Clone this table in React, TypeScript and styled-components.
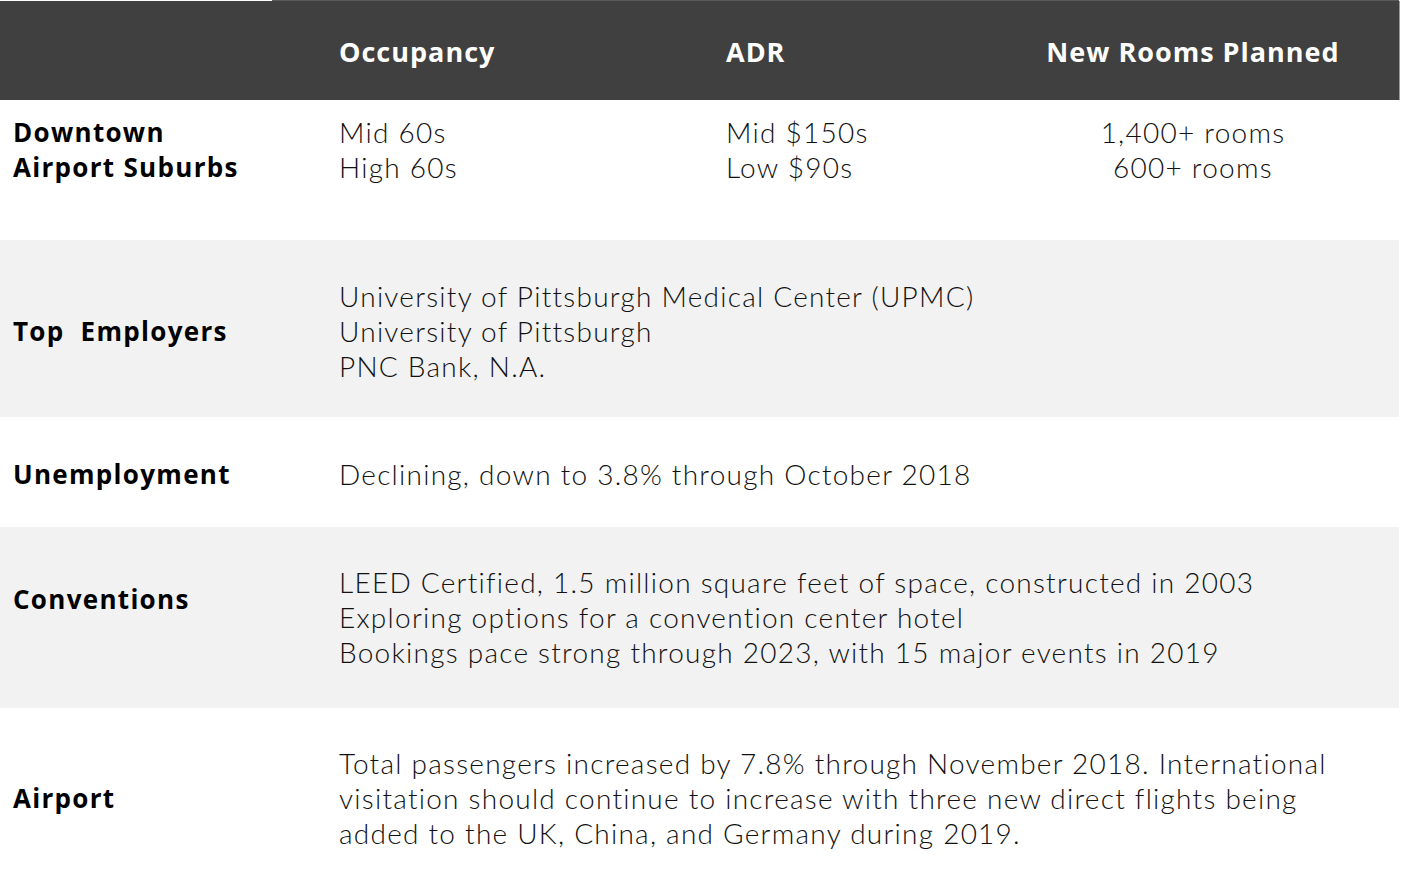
import React from "react";
import styled, { createGlobalStyle } from "styled-components";

const Global = createGlobalStyle`
  html, body { margin: 0; padding: 0; background: #ffffff; }
  body { font-family: Lato, "Open Sans", sans-serif; }
`;

const Table = styled.div`
  width: 1401px;
  display: flex;
  flex-direction: column;
`;

const TopEdge = styled.div`
  height: 1px;
  display: grid;
  grid-template-columns: 272px 1fr 2px;
  & > span:first-child { background: #ffffff; }
  & > span:nth-child(2) { background: #5a5a5a; }
`;

const COLS = "339px 387px 261px 1fr";

const HeaderRow = styled.div`
  height: 99px;
  width: 1400px;
  background: #404040;
  display: grid;
  grid-template-columns: ${COLS};
  align-items: center;
  border-right: 1px solid #9a9a9a;
  box-sizing: border-box;
`;

const HeadCell = styled.div<{ $center?: boolean }>`
  color: #ffffff;
  font-family: "Open Sans", sans-serif;
  font-weight: 700;
  font-size: 27px;
  letter-spacing: 1px;
  text-align: ${(p) => (p.$center ? "center" : "left")};
  margin-top: 2px;
  white-space: nowrap;
`;

const Row = styled.div<{ $shade?: boolean; $h: number; $pt: number }>`
  height: ${(p) => p.$h}px;
  width: 1399px;
  box-sizing: border-box;
  padding-top: ${(p) => p.$pt}px;
  background: ${(p) => (p.$shade ? "#f2f2f2" : "#ffffff")};
  display: grid;
  grid-template-columns: ${COLS};
  align-items: start;
`;

const Label = styled.div<{ $offset?: number }>`
  padding-left: 13px;
  margin-top: ${(p) => p.$offset ?? 0}px;
  font-family: "Open Sans", sans-serif;
  font-weight: 700;
  font-size: 26px;
  line-height: 35px;
  letter-spacing: 1.3px;
  color: #000000;
  white-space: pre;
`;

const Body = styled.div<{ $span?: boolean; $center?: boolean }>`
  grid-column: ${(p) => (p.$span ? "2 / 5" : "auto")};
  font-family: Lato, sans-serif;
  font-weight: 300;
  font-size: 28px;
  line-height: 35px;
  letter-spacing: 1.25px;
  color: #111111;
  text-align: ${(p) => (p.$center ? "center" : "left")};
  white-space: nowrap;
`;

const Line = styled.div``;

export default function App() {
  return (
    <>
      <Global />
      <Table>
        <TopEdge>
          <span />
          <span />
        </TopEdge>
        <HeaderRow>
          <div />
          <HeadCell>Occupancy</HeadCell>
          <HeadCell>ADR</HeadCell>
          <HeadCell $center>New Rooms Planned</HeadCell>
        </HeaderRow>
        <Row $h={140} $pt={15}>
          <Label>
            <Line>Downtown</Line>
            <Line>Airport Suburbs</Line>
          </Label>
          <Body>
            <Line>Mid 60s</Line>
            <Line>High 60s</Line>
          </Body>
          <Body>
            <Line>Mid $150s</Line>
            <Line>Low $90s</Line>
          </Body>
          <Body $center>
            <Line>1,400+ rooms</Line>
            <Line>600+ rooms</Line>
          </Body>
        </Row>
        <Row $shade $h={177} $pt={39}>
          <Label $offset={35}>{"Top  Employers"}</Label>
          <Body $span>
            <Line>University of Pittsburgh Medical Center (UPMC)</Line>
            <Line>University of Pittsburgh</Line>
            <Line>PNC Bank, N.A.</Line>
          </Body>
        </Row>
        <Row $h={110} $pt={40}>
          <Label>Unemployment</Label>
          <Body $span>
            <Line>Declining, down to 3.8% through October 2018</Line>
          </Body>
        </Row>
        <Row $shade $h={181} $pt={38}>
          <Label $offset={17}>Conventions</Label>
          <Body $span>
            <Line>LEED Certified, 1.5 million square feet of space, constructed in 2003</Line>
            <Line>Exploring options for a convention center hotel</Line>
            <Line>Bookings pace strong through 2023, with 15 major events in 2019</Line>
          </Body>
        </Row>
        <Row $h={178} $pt={38}>
          <Label $offset={35}>Airport</Label>
          <Body $span>
            <Line>Total passengers increased by 7.8% through November 2018. International</Line>
            <Line>visitation should continue to increase with three new direct flights being</Line>
            <Line>added to the UK, China, and Germany during 2019.</Line>
          </Body>
        </Row>
      </Table>
    </>
  );
}
